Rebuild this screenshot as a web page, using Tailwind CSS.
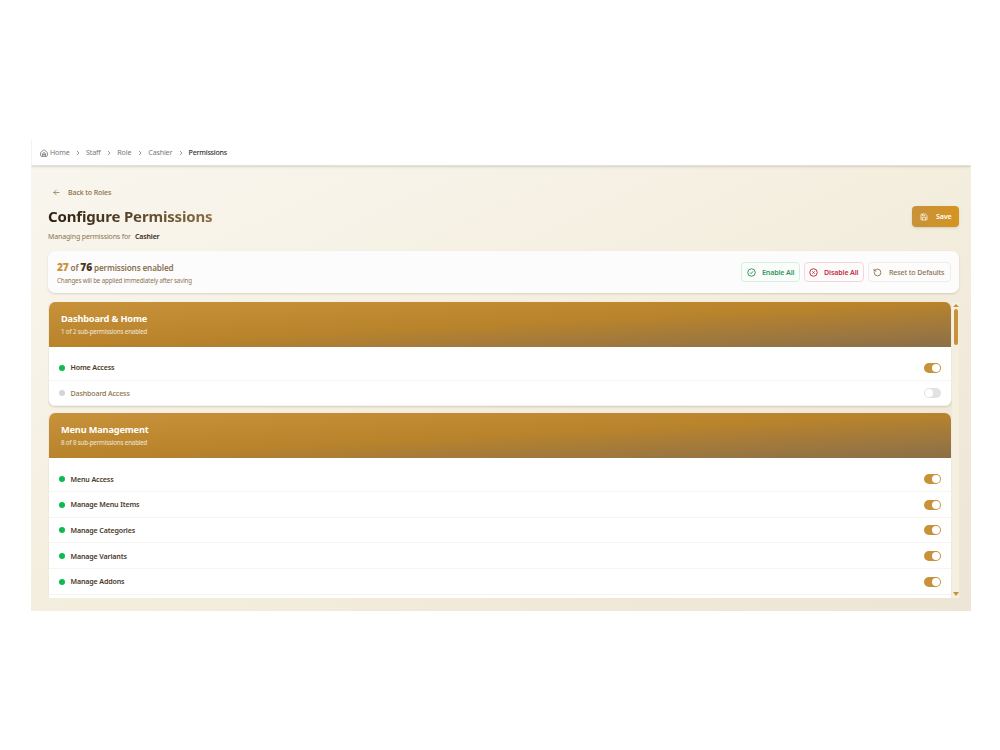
<!DOCTYPE html>
<html lang="en">
<head>
  <meta charset="UTF-8" />
  <meta name="viewport" content="width=device-width, initial-scale=1.0" />
  <title>Configure Permissions</title>
  <script src="https://cdn.jsdelivr.net/npm/@tailwindcss/browser@4"></script>
</head>
<body class="bg-white h-screen overflow-hidden font-['Noto_Sans','Open_Sans',sans-serif]">
  <div class="mt-[140px] ml-[31px] w-[940px] h-[471px] flex flex-col overflow-hidden whitespace-nowrap tracking-[-0.15px]">

    <!-- Breadcrumb -->
    <nav class="h-[26px] shrink-0 flex items-center pl-[8px] bg-white border-b border-l border-[#e3dfda] border-l-[#f3f3f3] text-[7.1px] text-[#777] shadow-sm z-10">
      <svg class="size-[8px] mr-[2px]" viewBox="0 0 24 24" fill="none" stroke="#666" stroke-width="2.2" stroke-linecap="round" stroke-linejoin="round"><path d="M2 10.5 12 2l10 8.500V20a2 2 0 0 1-2 2H4a2 2 0 0 1-2-2z"/><path d="M8 22v-7a4 4 0 0 1 8 0v7M8 17h8"/></svg>
      <span class="w-[20px]">Home</span>
      <svg class="size-[6px] mx-[5px]" viewBox="0 0 24 24" fill="none" stroke="#777" stroke-width="3"><path d="m8 4 8 8-8 8"/></svg>
      <span class="w-[15.3px]">Staff</span>
      <svg class="size-[6px] mx-[5px]" viewBox="0 0 24 24" fill="none" stroke="#777" stroke-width="3"><path d="m8 4 8 8-8 8"/></svg>
      <span class="w-[15px]">Role</span>
      <svg class="size-[6px] mx-[5px]" viewBox="0 0 24 24" fill="none" stroke="#777" stroke-width="3"><path d="m8 4 8 8-8 8"/></svg>
      <span class="w-[24.300px]">Cashier</span>
      <svg class="size-[6px] mx-[5px]" viewBox="0 0 24 24" fill="none" stroke="#777" stroke-width="3"><path d="m8 4 8 8-8 8"/></svg>
      <span class="text-[#333] font-medium tracking-[-0.25px]">Permissions</span>
    </nav>

    <main class="grow min-h-0 flex flex-col pl-[17px] pr-[12px] bg-linear-to-br from-[#f9f6ef] via-[#f4eede] to-[#ede5d6]">
      <!-- Title -->
      <div class="h-[85px] shrink-0 flex justify-between">
        <div class="pt-[20px]">
          <a class="flex items-center h-[13px] pl-[5px] text-[7.1px] font-medium text-[#8b6f47]">
            <svg class="size-[7px] mr-[8px]" viewBox="0 0 24 24" fill="none" stroke="currentColor" stroke-width="2.500" stroke-linecap="round" stroke-linejoin="round"><path d="M21 12H3m8-8-8 8 8 8"/></svg>
            Back to Roles
          </a>
          <h1 class="mt-[7px] h-[20px] leading-[20px] w-[168px] text-[15px] tracking-[-0.16px] font-bold bg-linear-to-r from-[#2c1e0e] to-[#8b6f47] bg-clip-text text-transparent">Configure Permissions</h1>
          <p class="mt-[5px] leading-[12px] text-[7px] text-[#8b7350]">Managing permissions for <b class="ml-[2.500px] font-semibold text-[#3a2a1a]">Cashier</b></p>
        </div>
        <button class="mt-[40px] w-[47px] h-[21px] flex items-center pl-[8px] rounded-[4px] bg-linear-to-r from-[#c8923a] to-[#d4941f] text-white text-[7.1px] font-semibold shadow-sm">
          <svg class="size-[8px] mr-[8px]" viewBox="0 0 24 24" fill="none" stroke="currentColor" stroke-width="2.2" stroke-linejoin="round"><path d="M3 5a2 2 0 0 1 2-2h11l5 5v11a2 2 0 0 1-2 2H5a2 2 0 0 1-2-2zM7 3v5h8M7 21v-8h10v8"/></svg>
          Save
        </button>
      </div>

      <!-- Summary -->
      <section class="h-[42px] shrink-0 flex items-center justify-between pl-[9px] pr-[8px] bg-[#fdfcfd] rounded-[7px] shadow-[0_1px_2px_rgba(90,60,20,0.18)]">
        <div class="pt-[2px]">
          <p class="leading-[14px] text-[8.2px] font-semibold text-[#8b7350] tracking-[-0.16px]"><b class="text-[10.2px] text-[#c8923a]">27</b> of <b class="text-[10.2px] text-[#4a3420]">76</b> permissions enabled</p>
          <p class="leading-[12px] text-[6.2px] text-[#8b7350]">Changes will be applied immediately after saving</p>
        </div>
        <div class="flex gap-[4px] text-[7.1px] font-semibold">
          <button class="w-[59px] h-[20px] flex items-center pl-[5px] rounded-[4px] border border-[#cdf3da] text-[#2c9a5a]">
            <svg class="size-[9px] mr-[6px]" viewBox="0 0 24 24" fill="none" stroke="currentColor" stroke-width="2.600"><circle cx="12" cy="12" r="10"/><path d="m8 12 3 3 5-6"/></svg>
            Enable All
          </button>
          <button class="w-[60px] h-[20px] flex items-center pl-[4px] rounded-[4px] border border-[#fcd3d6] text-[#c5303f]">
            <svg class="size-[9px] mr-[6px]" viewBox="0 0 24 24" fill="none" stroke="currentColor" stroke-width="2.600"><circle cx="12" cy="12" r="10"/><path d="m9 9 6 6m0-6-6 6"/></svg>
            Disable All
          </button>
          <button class="w-[83px] h-[20px] flex items-center pl-[4px] rounded-[4px] border border-[#f0ece6] text-[#8b7350] font-medium">
            <svg class="size-[9px] mr-[7px]" viewBox="0 0 24 24" fill="none" stroke="currentColor" stroke-width="2.400" stroke-linecap="round"><path d="M3 12a9 9 0 1 0 9-9 10 10 0 0 0-7 3L3 8M3 3v5h5"/></svg>
            Reset to Defaults
          </button>
        </div>
      </section>

      <!-- Permission groups -->
      <div class="mt-[9px] h-[296px] shrink-0 flex overflow-hidden">
        <div id="groups" class="w-[904px] h-full overflow-hidden flex flex-col gap-[7px]"></div>
        <div class="w-[7px] bg-[#f5efe0] flex flex-col items-center justify-between pt-[2px] pb-[2px]">
          <div class="flex flex-col items-center gap-[2px]">
            <svg class="w-[6px] h-[3px]" viewBox="0 0 6 4" preserveAspectRatio="none" fill="#c8923a"><path d="M0 4 3 0l3 4z"/></svg>
            <div class="w-[4px] h-[36px] rounded-full bg-[#c8923a]"></div>
          </div>
          <svg class="w-[6px] h-[4px]" viewBox="0 0 6 4" fill="#c8923a"><path d="M0 0h6L3 4z"/></svg>
        </div>
      </div>
    </main>
  </div>

  <script>
    const groups = [
      { title: 'Dashboard & Home', note: '1 of 2 sub-permissions enabled', items: [['Home Access', true], ['Dashboard Access', false]] },
      { title: 'Menu Management', note: '8 of 8 sub-permissions enabled', items: [['Menu Access', true], ['Manage Menu Items', true], ['Manage Categories', true], ['Manage Variants', true], ['Manage Addons', true]] }
    ];

    function row([name, on]) {
      return `
        <li class="h-[25.65px] flex items-center pl-[9.5px] pr-[10px] pt-px border-b border-[#f6f4f1]">
          <span class="size-[6px] rounded-full mr-[6px] ${on ? 'bg-[#0dbb4f]' : 'bg-[#d3d5db]'}"></span>
          <span class="grow text-[7.1px] leading-[11px] ${on ? 'font-semibold text-[#4a3a2a]' : 'font-medium text-[#8b7350]'}">${name}</span>
          <span class="w-[17px] h-[10px] rounded-full flex items-center p-[1px] ${on ? 'bg-[#c8923a] justify-end' : 'bg-[#e2e2e4]'}">
            <span class="size-[8px] rounded-full bg-white"></span>
          </span>
        </li>`;
    }

    document.getElementById('groups').innerHTML = groups.map(g => `
      <section class="shrink-0 rounded-[7px] last:rounded-b-none last:grow overflow-hidden bg-white border-x border-[#f0e9dc] shadow-[0_1px_2px_rgba(90,60,20,0.2)]">
        <header class="h-[45px] pl-[12px] pt-[8.5px] text-white bg-linear-to-br from-[#c8923a] via-[#b8832a] to-[#8b6f47]">
          <h2 class="text-[9.2px] leading-[15px] font-bold">${g.title.replace('&', '&amp;')}</h2>
          <p class="text-[6.2px] leading-[12px] text-white/80">${g.note}</p>
        </header>
        <ul class="pt-[8px] pb-[0.1px]">${g.items.map(row).join('')}</ul>
      </section>`).join('');
  </script>
</body>
</html>
